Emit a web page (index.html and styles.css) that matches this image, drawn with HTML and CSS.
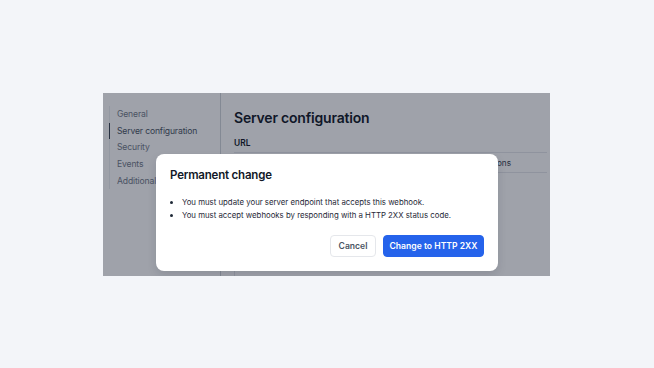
FILE: index.html
```html
<!DOCTYPE html>
<html lang="en">
<head>
<meta charset="utf-8">
<title>Server configuration</title>
<link rel="stylesheet" href="styles.css">
</head>
<body>
<div class="window">
  <div class="app">
    <nav class="sidebar">
      <ul class="nav">
        <li class="nav-item">General</li>
        <li class="nav-item active">Server configuration</li>
        <li class="nav-item">Security</li>
        <li class="nav-item">Events</li>
        <li class="nav-item">Additional options</li>
      </ul>
    </nav>
    <main class="main">
      <h1 class="title">Server configuration</h1>
      <div class="label">URL</div>
      <div class="row">
        <span class="row-text">HTTP status codes and options</span>
      </div>
      <div class="box"></div>
    </main>
  </div>
  <div class="overlay"></div>
  <div class="modal" role="dialog">
    <h2 class="modal-title">Permanent change</h2>
    <ul class="modal-list">
      <li>You must update your server endpoint that accepts this webhook.</li>
      <li>You must accept webhooks by responding with a HTTP 2XX status code.</li>
    </ul>
    <div class="modal-actions">
      <button class="btn btn-secondary">Cancel</button>
      <button class="btn btn-primary">Change to HTTP 2XX</button>
    </div>
  </div>
</div>
</body>
</html>
```

FILE: styles.css
```css
* { box-sizing: border-box; }
html, body { margin: 0; padding: 0; }
body {
  width: 654px;
  height: 368px;
  background: #f3f5f9;
  padding: 93px 0 0 103px;
  font-family: Inter, "Noto Sans", sans-serif;
  color: #111827;
}
.window {
  position: relative;
  width: 447px;
  height: 183px;
  background: #fff;
  overflow: hidden;
}
.app {
  display: flex;
  height: 100%;
}
.sidebar {
  width: 118px;
  flex: none;
  border-right: 1px solid #d1d5db;
  padding: 13px 0 0 6px;
}
.nav {
  list-style: none;
  margin: 0;
  padding: 0;
  border-left: 1px solid #eceef2;
}
.nav-item {
  font-size: 8.6px;
  letter-spacing: -0.15px;
  color: #737b89;
  height: 16.7px;
  line-height: 16.7px;
  padding-left: 7px;
  white-space: nowrap;
}
.nav-item.active {
  color: #4b5563;
  box-shadow: inset 1px 0 0 #374151;
  margin-left: -1px;
  padding-left: 8px;
}
.main {
  flex: 1;
  padding: 15px 3px 0 13px;
  display: flex;
  flex-direction: column;
}
.title {
  margin: 0;
  font-size: 14px;
  font-weight: 600;
  letter-spacing: -0.2px;
  line-height: 20px;
}
.label {
  margin-top: 9px;
  font-size: 8.4px;
  font-weight: 600;
  line-height: 12px;
}
.row {
  margin-top: 3px;
  height: 21px;
  border-top: 1px solid #e5e7eb;
  border-bottom: 1px solid #e5e7eb;
  display: flex;
  align-items: center;
  justify-content: flex-end;
  padding-right: 36px;
}
.row-text {
  font-size: 8.2px;
  color: #374151;
}
.box {
  flex: 1;
  margin-top: 12px;
  border-left: 1px solid #e5e7eb;
}
.overlay {
  position: absolute;
  inset: 0;
  background: rgba(15, 23, 42, 0.4);
}
.modal {
  position: absolute;
  left: 53px;
  top: 61px;
  width: 342px;
  height: 117px;
  background: #fff;
  border-radius: 8px;
  padding: 14px;
  display: flex;
  flex-direction: column;
  box-shadow: 0 4px 10px rgba(15, 23, 42, 0.12);
}
.modal-title {
  margin: 0;
  font-size: 11.5px;
  font-weight: 600;
  letter-spacing: -0.2px;
  line-height: 15px;
  color: #111827;
}
.modal-list {
  margin: 13px 0 0 0;
  padding-left: 12px;
  font-size: 7.8px;
  line-height: 13px;
  color: #1f2937;
}
.modal-actions {
  margin-top: auto;
  display: flex;
  justify-content: flex-end;
  gap: 7px;
}
.btn {
  height: 22px;
  border-radius: 4px;
  font-family: Inter, "Noto Sans", sans-serif;
  font-size: 8.6px;
  font-weight: 600;
  padding: 0;
  white-space: nowrap;
  cursor: pointer;
}
.btn-secondary {
  width: 46px;
  background: #fff;
  border: 1px solid #e5e7eb;
  color: #4b5563;
}
.btn-primary {
  width: 101px;
  background: #2563eb;
  border: 1px solid #2563eb;
  color: #fff;
}
```
